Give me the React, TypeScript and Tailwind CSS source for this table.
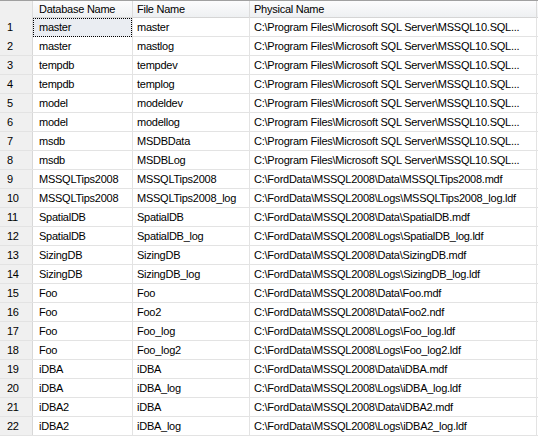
const rows: [string, string, string][] = [
  ["master", "master", "C:\\Program Files\\Microsoft SQL Server\\MSSQL10.SQL..."],
  ["master", "mastlog", "C:\\Program Files\\Microsoft SQL Server\\MSSQL10.SQL..."],
  ["tempdb", "tempdev", "C:\\Program Files\\Microsoft SQL Server\\MSSQL10.SQL..."],
  ["tempdb", "templog", "C:\\Program Files\\Microsoft SQL Server\\MSSQL10.SQL..."],
  ["model", "modeldev", "C:\\Program Files\\Microsoft SQL Server\\MSSQL10.SQL..."],
  ["model", "modellog", "C:\\Program Files\\Microsoft SQL Server\\MSSQL10.SQL..."],
  ["msdb", "MSDBData", "C:\\Program Files\\Microsoft SQL Server\\MSSQL10.SQL..."],
  ["msdb", "MSDBLog", "C:\\Program Files\\Microsoft SQL Server\\MSSQL10.SQL..."],
  ["MSSQLTips2008", "MSSQLTips2008", "C:\\FordData\\MSSQL2008\\Data\\MSSQLTips2008.mdf"],
  ["MSSQLTips2008", "MSSQLTips2008_log", "C:\\FordData\\MSSQL2008\\Logs\\MSSQLTips2008_log.ldf"],
  ["SpatialDB", "SpatialDB", "C:\\FordData\\MSSQL2008\\Data\\SpatialDB.mdf"],
  ["SpatialDB", "SpatialDB_log", "C:\\FordData\\MSSQL2008\\Logs\\SpatialDB_log.ldf"],
  ["SizingDB", "SizingDB", "C:\\FordData\\MSSQL2008\\Data\\SizingDB.mdf"],
  ["SizingDB", "SizingDB_log", "C:\\FordData\\MSSQL2008\\Logs\\SizingDB_log.ldf"],
  ["Foo", "Foo", "C:\\FordData\\MSSQL2008\\Data\\Foo.mdf"],
  ["Foo", "Foo2", "C:\\FordData\\MSSQL2008\\Data\\Foo2.ndf"],
  ["Foo", "Foo_log", "C:\\FordData\\MSSQL2008\\Logs\\Foo_log.ldf"],
  ["Foo", "Foo_log2", "C:\\FordData\\MSSQL2008\\Logs\\Foo_log2.ldf"],
  ["iDBA", "iDBA", "C:\\FordData\\MSSQL2008\\Data\\iDBA.mdf"],
  ["iDBA", "iDBA_log", "C:\\FordData\\MSSQL2008\\Logs\\iDBA_log.ldf"],
  ["iDBA2", "iDBA", "C:\\FordData\\MSSQL2008\\Data\\iDBA2.mdf"],
  ["iDBA2", "iDBA_log", "C:\\FordData\\MSSQL2008\\Logs\\iDBA2_log.ldf"],
];

const cols = "grid grid-cols-[33px_100px_117px_287px]";

export default function App() {
  return (
    <div
      className="w-[538px] h-[439px] bg-white overflow-hidden text-[11px] tracking-[-0.25px] text-black"
      style={{ fontFamily: '"Liberation Sans", Arial, sans-serif' }}
    >
      <div className={`${cols} h-[18px] border-t border-[#a0a0a0] bg-gradient-to-b from-[#fcfcfd] to-[#eef0f2] border-b border-b-[#d5d5d5]`}>
        <div className="border-r border-[#dcdcdc] bg-[#f0f0f0]" />
        <div className="border-r border-[#dcdcdc] pl-[6px] flex items-center">Database Name</div>
        <div className="border-r border-[#dcdcdc] pl-[4px] flex items-center">File Name</div>
        <div className="border-r border-[#dcdcdc] pl-[4px] flex items-center">Physical Name</div>
      </div>
      {rows.map(([db, file, phys], i) => (
        <div key={i} className={`${cols} h-[19px] border-b border-[#e3e3e3]`}>
          <div className="border-r border-[#d8d8d8] bg-[#f0f0f0] pl-[7px] flex items-center">
            {i + 1}
          </div>
          {i === 0 ? (
            <div className="border-r border-[#e3e3e3] flex">
              <div className="flex-1 border border-dotted border-black bg-[#eaedf2] pl-[5px] flex items-center">
                {db}
              </div>
            </div>
          ) : (
            <div className="border-r border-[#e3e3e3] pl-[6px] flex items-center">{db}</div>
          )}
          <div className="border-r border-[#e3e3e3] pl-[4px] flex items-center whitespace-nowrap">
            {file}
          </div>
          <div className="border-r border-[#e3e3e3] pl-[4px] flex items-center whitespace-nowrap overflow-hidden">
            {phys}
          </div>
        </div>
      ))}
    </div>
  );
}
